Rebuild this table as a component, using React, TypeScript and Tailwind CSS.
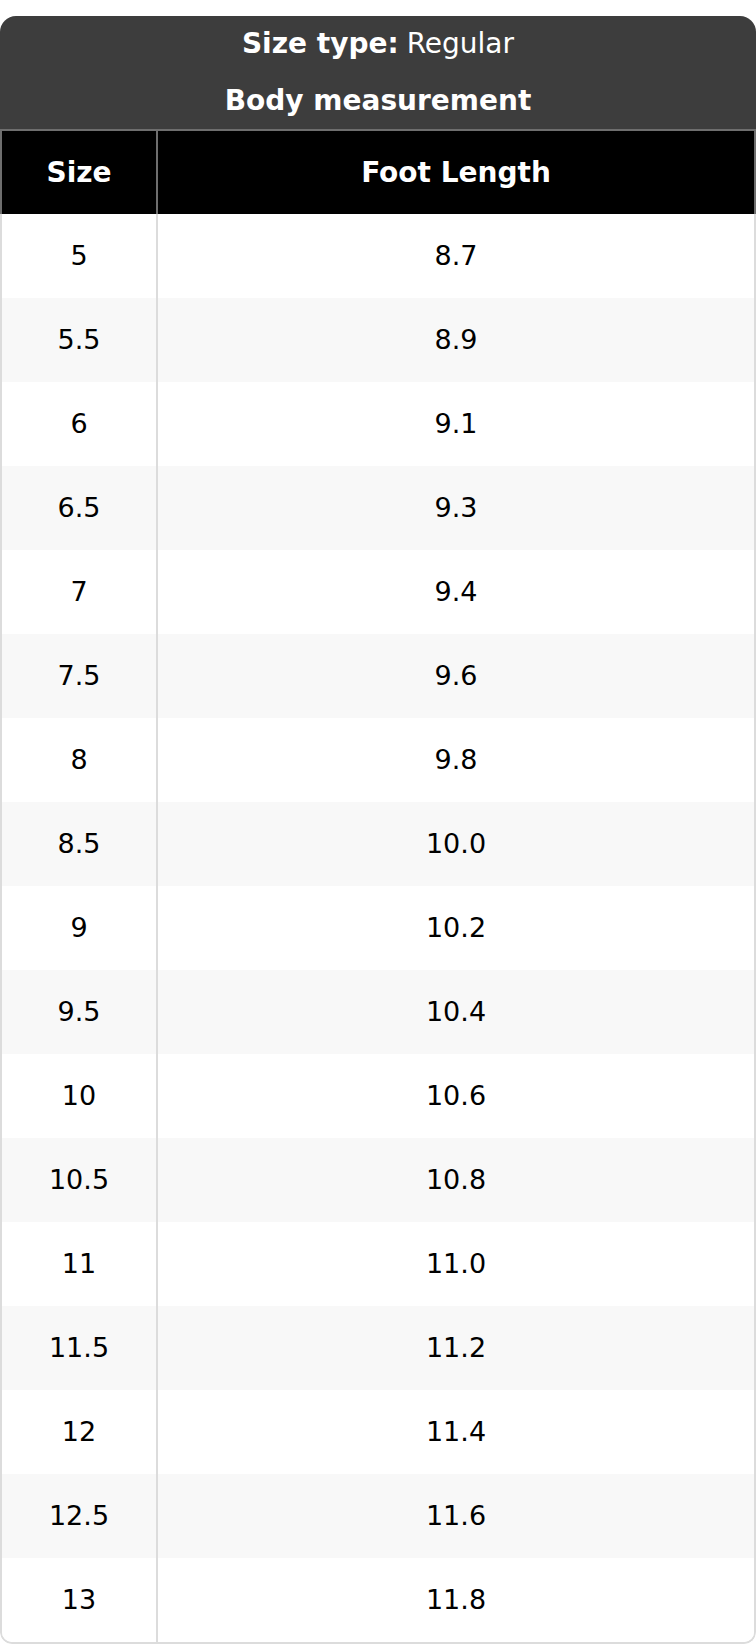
const rows: [string, string][] = [
  ['5', '8.7'],
  ['5.5', '8.9'],
  ['6', '9.1'],
  ['6.5', '9.3'],
  ['7', '9.4'],
  ['7.5', '9.6'],
  ['8', '9.8'],
  ['8.5', '10.0'],
  ['9', '10.2'],
  ['9.5', '10.4'],
  ['10', '10.6'],
  ['10.5', '10.8'],
  ['11', '11.0'],
  ['11.5', '11.2'],
  ['12', '11.4'],
  ['12.5', '11.6'],
  ['13', '11.8'],
]

export default function App() {
  return (
    <div className="w-[756px] pt-4 bg-white" style={{ fontFamily: '"DejaVu Sans", Verdana, sans-serif' }}>
      <div className="rounded-t-[16px] rounded-b-[12px] overflow-hidden">
        {/* Title block */}
        <div className="bg-[#3d3d3d] text-white text-[28px] border-b-2 border-[#6e6e6e]">
          <div className="h-[56px] flex items-center justify-center">
            <span className="font-bold">Size type:</span>
            <span className="ml-2">Regular</span>
          </div>
          <div className="h-[57px] flex items-center justify-center font-bold">Body measurement</div>
        </div>

        {/* Column headers */}
        <div className="flex h-[83px] bg-black text-white text-[28px] font-bold border-x-2 border-[#6e6e6e]">
          <div className="w-[156px] flex items-center justify-center border-r-2 border-[#6e6e6e]">Size</div>
          <div className="flex-1 flex items-center justify-center">Foot Length</div>
        </div>

        {/* Body */}
        <div className="border-x-2 border-b-2 border-[#dcdcdc] rounded-b-[12px] overflow-hidden">
          {rows.map(([size, len], i) => (
            <div key={size} className={`flex h-[84px] text-[27px] text-black ${i % 2 === 1 ? 'bg-[#f8f8f8]' : 'bg-white'}`}>
              <div className="w-[156px] flex items-center justify-center border-r-2 border-[#dcdcdc]">{size}</div>
              <div className="flex-1 flex items-center justify-center">{len}</div>
            </div>
          ))}
        </div>
      </div>
    </div>
  )
}
